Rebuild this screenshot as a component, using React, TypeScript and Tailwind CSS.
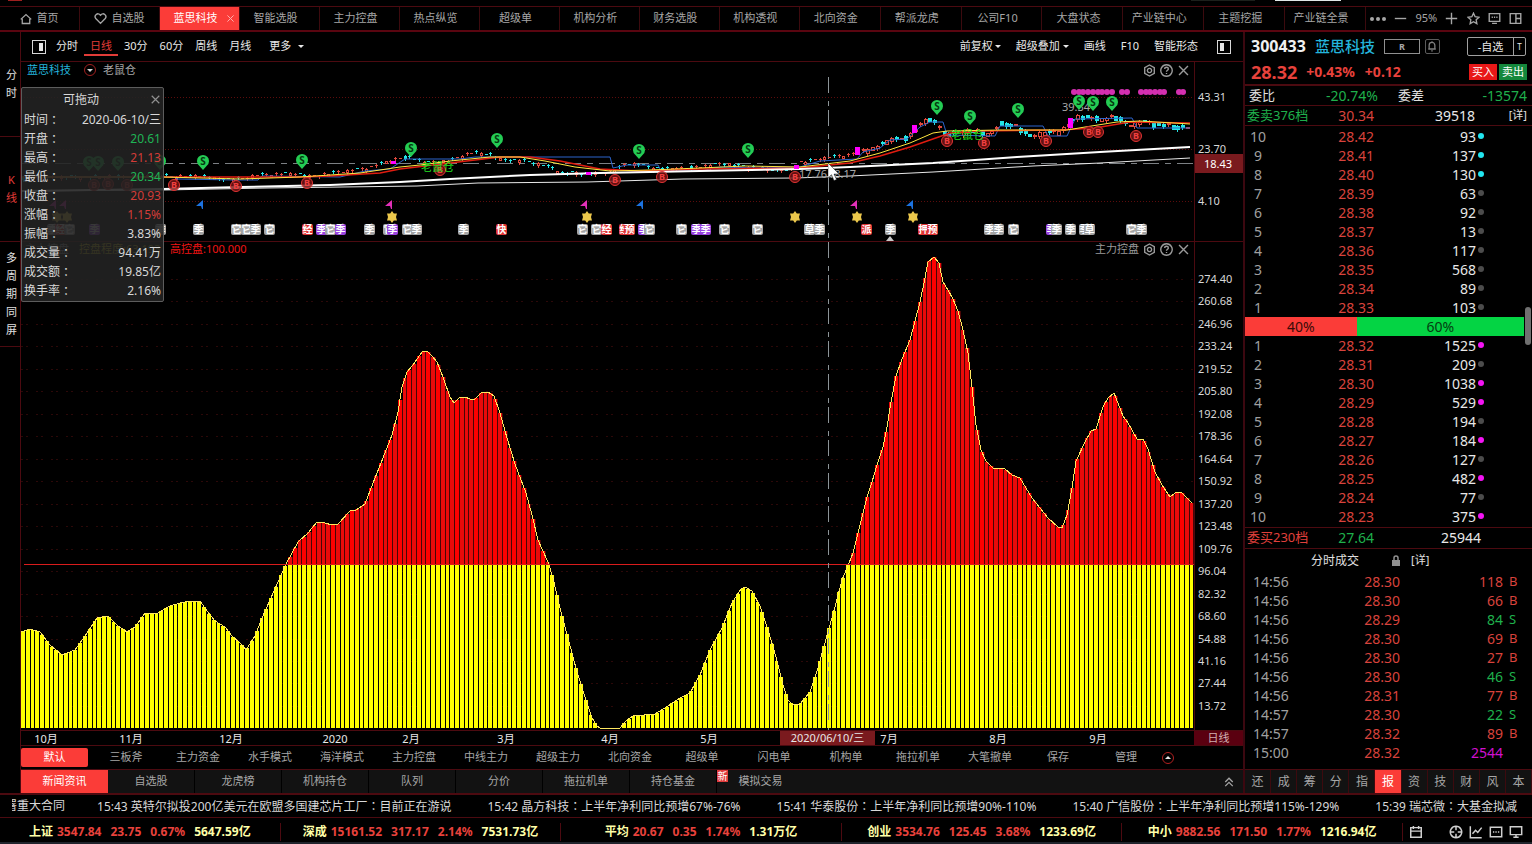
import { useState } from "react";
import clsx from "clsx";

type Point = [number, number];

// plot areas share these canvas bounds
const LEFT = 21;
const WIDTH = 1173;
const TOP = 62;
const HEIGHT = 179;
const STEP = 4.77;

const TABS = [
  "首页", "自选股", "蓝思科技", "智能选股", "主力控盘", "热点纵览", "超级单", "机构分析", "财务选股", "机构透视",
  "北向资金", "帮派龙虎", "公司F10", "大盘状态", "产业链中心", "主题挖掘", "产业链全景",
];
const PERIODS = ["分时", "日线", "30分", "60分", "周线", "月线"];
const SIDE = ["分时", "K线", "多周期同屏"];
const TEMPLATES = [
  "三板斧", "主力资金", "水手模式", "海洋模式", "主力控盘", "中线主力", "超级主力", "北向资金", "超级单", "闪电单",
  "机构单", "拖拉机单", "大笔撤单",
];
const PANELS = ["新闻资讯", "自选股", "龙虎榜", "机构持仓", "队列", "分价", "拖拉机单", "持仓基金", "模拟交易"];
const QUOTE_TABS = ["还", "成", "筹", "分", "指", "报", "资", "技", "财", "风", "本"];

const DETAIL = [
  { label: "时间", value: "2020-06-10/三", cls: "text-[#d8d8d8]" },
  { label: "开盘", value: "20.61", cls: "text-[#1fb455]" },
  { label: "最高", value: "21.13", cls: "text-[#d23c38]" },
  { label: "最低", value: "20.34", cls: "text-[#1fb455]" },
  { label: "收盘", value: "20.93", cls: "text-[#d23c38]" },
  { label: "涨幅", value: "1.15%", cls: "text-[#d23c38]" },
  { label: "振幅", value: "3.83%", cls: "text-[#d8d8d8]" },
  { label: "成交量", value: "94.41万", cls: "text-[#d8d8d8]" },
  { label: "成交额", value: "19.85亿", cls: "text-[#d8d8d8]" },
  { label: "换手率", value: "2.16%", cls: "text-[#d8d8d8]" },
];

const MONTHS: [string, number][] = [
  ["10月", 46], ["11月", 131], ["12月", 231], ["2020", 335], ["2月", 411], ["3月", 506], ["4月", 610],
  ["5月", 709], ["7月", 889], ["8月", 998], ["9月", 1098],
];

const AXIS = [
  "274.40", "260.68", "246.96", "233.24", "219.52", "205.80", "192.08", "178.36", "164.64", "150.92",
  "137.20", "123.48", "109.76", "96.04", "82.32", "68.60", "54.88", "41.16", "27.44", "13.72",
];

interface Level {
  level: number;
  price: string;
  volume: number;
  dot?: "cyan" | "pink";
}

const ASKS: Level[] = [
  { level: 10, price: "28.42", volume: 93, dot: "cyan" },
  { level: 9, price: "28.41", volume: 137, dot: "cyan" },
  { level: 8, price: "28.40", volume: 130, dot: "cyan" },
  { level: 7, price: "28.39", volume: 63 },
  { level: 6, price: "28.38", volume: 92 },
  { level: 5, price: "28.37", volume: 13 },
  { level: 4, price: "28.36", volume: 117 },
  { level: 3, price: "28.35", volume: 568 },
  { level: 2, price: "28.34", volume: 89 },
  { level: 1, price: "28.33", volume: 103 },
];

const BIDS: Level[] = [
  { level: 1, price: "28.32", volume: 1525, dot: "pink" },
  { level: 2, price: "28.31", volume: 209 },
  { level: 3, price: "28.30", volume: 1038, dot: "pink" },
  { level: 4, price: "28.29", volume: 529, dot: "pink" },
  { level: 5, price: "28.28", volume: 194 },
  { level: 6, price: "28.27", volume: 184, dot: "pink" },
  { level: 7, price: "28.26", volume: 127 },
  { level: 8, price: "28.25", volume: 482, dot: "pink" },
  { level: 9, price: "28.24", volume: 77 },
  { level: 10, price: "28.23", volume: 375, dot: "pink" },
];

const TRADES: [string, string, number, string][] = [
  ["14:56", "28.30", 118, "B"],
  ["14:56", "28.30", 66, "B"],
  ["14:56", "28.29", 84, "S"],
  ["14:56", "28.30", 69, "B"],
  ["14:56", "28.30", 27, "B"],
  ["14:56", "28.30", 46, "S"],
  ["14:56", "28.31", 77, "B"],
  ["14:57", "28.30", 22, "S"],
  ["14:57", "28.32", 89, "B"],
  ["15:00", "28.32", 2544, ""],
];

const NEWS = [
  "15:43 英特尔拟投200亿美元在欧盟多国建芯片工厂：目前正在游说",
  "15:42 晶方科技：上半年净利同比预增67%-76%",
  "15:41 华泰股份：上半年净利同比预增90%-110%",
  "15:40 广信股份：上半年净利同比预增115%-129%",
  "15:39 瑞芯微：大基金拟减",
];

const INDEXES = [
  ["上证", "3547.84", "23.75", "0.67%", "5647.59亿"],
  ["深成", "15161.52", "317.17", "2.14%", "7531.73亿"],
  ["平均", "20.67", "0.35", "1.74%", "1.31万亿"],
  ["创业", "3534.76", "125.45", "3.68%", "1233.69亿"],
  ["中小", "9882.56", "171.50", "1.77%", "1216.94亿"],
];

// control ratio curve
const CONTROL: Point[] = [
  [21, 632], [30, 629], [40, 632], [50, 645], [62, 655], [75, 650], [85, 636], [97, 618], [108, 616], [118, 626],
  [127, 632], [135, 627], [145, 613], [158, 613], [170, 606], [180, 603], [190, 601], [200, 601], [207, 611],
  [215, 621], [225, 627], [232, 636], [240, 643], [246, 650], [255, 636], [262, 618], [270, 600], [278, 582],
  [286, 564], [298, 542], [308, 533], [317, 522], [325, 523], [332, 525], [338, 524], [350, 511], [356, 510],
  [365, 504], [373, 483], [383, 458], [392, 435], [398, 412], [402, 387], [407, 372], [413, 365], [422, 352],
  [427, 351], [432, 356], [437, 362], [443, 377], [450, 397], [454, 403], [459, 398], [465, 397], [470, 399],
  [475, 399], [482, 392], [488, 392], [494, 396], [500, 413], [507, 438], [515, 464], [526, 493], [532, 515],
  [538, 540], [548, 562], [553, 578], [560, 608], [568, 638], [577, 672], [586, 700], [592, 718], [597, 726],
  [600, 728], [620, 728], [627, 720], [633, 716], [655, 714], [668, 706], [680, 698], [690, 693], [700, 675],
  [710, 650], [722, 628], [732, 603], [741, 589], [745, 587], [752, 591], [760, 606], [768, 630], [776, 657],
  [783, 685], [788, 700], [793, 705], [800, 704], [810, 692], [818, 668], [828, 632], [835, 607], [842, 580],
  [849, 563], [853, 553], [858, 533], [867, 497], [872, 482], [877, 465], [883, 447], [887, 427], [891, 402],
  [896, 376], [902, 359], [910, 340], [915, 321], [920, 302], [924, 283], [928, 262], [934, 257], [939, 263],
  [943, 282], [948, 290], [953, 299], [958, 311], [963, 330], [968, 353], [972, 387], [976, 425], [981, 450],
  [986, 461], [993, 468], [1005, 469], [1012, 475], [1020, 478], [1032, 498], [1040, 508], [1048, 518],
  [1058, 527], [1062, 528], [1067, 515], [1072, 488], [1076, 461], [1085, 442], [1091, 431], [1096, 429],
  [1103, 407], [1108, 398], [1114, 393], [1123, 416], [1128, 423], [1137, 439], [1143, 439], [1148, 449],
  [1155, 472], [1162, 485], [1170, 497], [1175, 493], [1181, 492], [1192, 503],
];

const PRICE: Point[] = [
  [24, 178], [60, 176], [100, 176], [165, 175], [175, 176], [205, 175], [215, 178], [235, 179], [262, 174], [300, 173],
  [310, 176], [340, 171], [370, 167], [395, 158], [410, 156], [425, 162], [450, 160], [470, 152], [490, 153],
  [500, 159], [520, 159], [540, 164], [555, 168], [560, 172], [600, 173], [615, 169], [625, 163], [640, 164],
  [660, 168], [690, 167], [720, 163], [750, 166], [780, 170], [795, 167], [800, 162], [830, 156], [850, 154],
  [860, 150], [880, 145], [890, 137], [905, 137], [915, 128], [925, 118], [935, 120], [945, 133], [970, 129],
  [990, 133], [1000, 122], [1015, 124], [1030, 135], [1045, 131], [1060, 130], [1070, 122], [1078, 114],
  [1100, 118], [1115, 115], [1130, 124], [1140, 120], [1160, 123], [1190, 127],
];

const LINE_YELLOW = "21,177 163,177 240,179 300,177 360,173 400,167 420,165 450,161 490,157 520,157 545,161 575,167 610,171 650,170 700,168 745,166 800,167 850,161 880,153 910,143 933,133 947,131 1000,130 1067,130 1085,127 1117,122 1140,121 1190,124";
const LINE_RED = "21,177 163,177 300,177 330,176 380,173 400,169 450,163 500,157 530,157 560,161 600,169 640,171 700,169 800,168 850,163 880,156 910,147 950,133 980,131 1060,130 1095,128 1130,122 1190,123";
const LINE_BLUE = "60,177 175,177 177,179 235,180 258,180 262,176 340,177 365,171 390,169 405,159 460,159 475,157 610,157 613,168 627,165 658,165 661,171 700,171 720,167 760,168 800,167 820,161 857,159 863,152 880,148 890,140 907,139 920,127 930,122 943,122 947,135 995,136 1000,126 1043,126 1048,136 1067,136 1075,119 1132,118 1137,128 1190,128";
const LINE_LONG = "21,191 163,189 240,187 330,185 400,182 450,179 530,175 600,173 700,171 800,169 850,167 933,163 1017,157 1100,152 1190,147";
const LINE_SLOW = "21,191 163,190 267,188 417,186 478,183 587,182 683,179 795,178 850,176 933,172 1033,166 1100,163 1190,158";

const SELLS: Point[] = [
  [89, 162], [98, 162], [118, 162], [160, 161], [203, 161], [302, 160], [411, 148], [497, 139], [639, 150],
  [748, 149], [937, 106], [970, 116], [1018, 109], [1079, 101], [1093, 102], [1112, 102],
];
const BUYS: Point[] = [
  [94, 185], [108, 184], [127, 185], [174, 185], [236, 186], [307, 183], [440, 170], [615, 180], [662, 177],
  [795, 177], [947, 141], [984, 143], [1046, 141], [1089, 132], [1098, 132], [1136, 136],
];
const DOTS = [
  1074, 1079, 1083, 1088, 1093, 1098, 1102, 1107, 1112, 1122, 1127, 1141, 1146, 1150, 1155, 1160, 1164, 1179, 1183,
];
const STARS = [57, 67, 392, 587, 795, 857, 913];
const FLAGS: [number, string][] = [
  [54, "#e22fb8"], [64, "#e22fb8"], [201, "#1c72e0"], [390, "#e22fb8"], [585, "#e22fb8"], [641, "#1c72e0"],
  [855, "#e22fb8"], [911, "#1c72e0"],
];
const SPIKES: [number, number, number][] = [
  [391, 161, 3], [586, 172, 3], [794, 165, 4], [855, 147, 8], [912, 125, 8], [1068, 118, 10],
];

const BADGES: [number, string, "gray" | "red" | "purple"][] = [
  [52, "季", "gray"], [60, "经", "red"], [69, "它", "gray"], [94, "季", "purple"], [160, "季", "gray"],
  [198, "季", "gray"], [236, "它", "gray"], [246, "它", "gray"], [255, "季", "gray"], [269, "它", "gray"],
  [307, "经", "red"], [321, "季", "purple"], [330, "它", "gray"], [340, "季", "purple"], [369, "季", "gray"],
  [388, "它", "gray"], [392, "季", "purple"], [407, "它", "gray"], [416, "季", "gray"], [463, "季", "gray"],
  [501, "快", "red"], [582, "它", "gray"], [596, "它", "gray"], [606, "经", "red"], [624, "经", "red"],
  [629, "预", "red"], [643, "季", "purple"], [649, "它", "gray"], [681, "它", "gray"], [696, "季", "purple"],
  [705, "季", "purple"], [724, "它", "gray"], [757, "它", "gray"], [809, "草", "gray"], [819, "季", "gray"],
  [866, "派", "red"], [890, "季", "gray"], [923, "押", "red"], [932, "预", "red"], [989, "季", "gray"],
  [998, "季", "gray"], [1013, "它", "gray"], [1051, "季", "purple"], [1056, "季", "gray"], [1070, "季", "gray"],
  [1084, "季", "gray"], [1089, "草", "gray"], [1131, "它", "gray"], [1141, "季", "gray"],
];

const BADGE_BG = { gray: "bg-[#a4a4a4]", red: "bg-[#e03434]", purple: "bg-[#9a44e0]" };

function valueAt(points: Point[], x: number): number {
  const i = points.findIndex((p) => p[0] >= x);
  if (i < 0) return points[points.length - 1][1];
  if (i === 0) return points[0][1];
  const [x0, y0] = points[i - 1];
  const [x1, y1] = points[i];
  return y0 + ((y1 - y0) * (x - x0)) / (x1 - x0);
}

function left(x: number): string {
  return `${((x - LEFT) / WIDTH) * 100}%`;
}

function place(x: number, y: number) {
  return { left: left(x), top: `${((y - TOP) / HEIGHT) * 100}%` };
}

const ICONS = {
  home: "M1 8.5 8 2l7 6.500M3 7.500V14h10V7.500",
  heart: "M8 14 2.200 8C-.5 4.500 4.500-.5 8 4c3.500-4.500 8.500.5 5.800 4z",
  star: "m8 1.500 2 4.300 4.700.6-3.400 3.200.8 4.700L8 12l-4.100 2.300.8-4.700L1.300 6.400 6 5.800z",
  message: "M1.500 2h13v9.500h-13zM4.500 6.500h1.500M7.300 6.500h1.500M10.200 6.500h1.500M5 14h6",
  layout: "M1.500 2h13v12h-13zM8.500 2v12M8.500 8h6",
  minus: "M1 8h14",
  plus: "M1 8h14M8 1v14",
  gear: "M8 1.200 13.900 4.600v6.800L8 14.800 2.100 11.400V4.600zM8 5.400a2.600 2.600 0 1 0 .01 0z",
  help: "M8 1a7 7 0 1 0 .01 0zM5.800 6.200c0-3 4.500-2.800 4.500-.2 0 1.600-2.300 1.700-2.300 3.500M8 11.200v1.200",
  close: "m2.500 2.500 11 11M13.500 2.500l-11 11",
  bell: "M3 12h10M4.200 12V7c0-5 7.600-5 7.600 0v5M8 1.500v2M7 14.500h2",
  chevrons: "m3 8 5-5 5 5M3 13.500l5-5 5 5",
  calendar: "M2 3h12v11H2zM2 7h12M5 1v3.500M11 1v3.500",
  target: "M8 1.500a6.500 6.500 0 1 0 .01 0zM8 1v5M8 10v5M1 8h5M10 8h5",
  chart: "M1.500 1.500v13h13M4 10l3.500-4 2.500 2.500L14.500 3",
  chat: "M1.500 2.500h13v11h-13zM4.500 8h1.500M7.300 8h1.500M10.200 8h1.500",
  monitor: "M1.500 2h13v9h-13zM8 11v3M5 14h6",
};

function Icon({ name, size = 14, className }: { name: keyof typeof ICONS; size?: number; className?: string }) {
  return (
    <svg
      viewBox="0 0 16 16"
      width={size}
      height={size}
      fill="none"
      stroke="currentColor"
      strokeWidth={1.7}
      className={clsx("shrink-0", className)}
      aria-hidden="true"
    >
      <path d={ICONS[name]} />
    </svg>
  );
}

function Caret() {
  return (
    <svg viewBox="0 0 6 3" width="6" height="3" className="shrink-0" aria-hidden="true">
      <path d="M0 0h6L3 3z" fill="currentColor" />
    </svg>
  );
}

function TopTabs() {
  return (
    <header>
      <div className="flex h-[6px] items-start pl-2">
        <span className="h-px w-[14px] bg-[#a02020]" />
        <span className="mr-5 ml-auto h-px w-16 bg-[#1c201c]" />
        <span className="mr-[191px] h-px w-[66px] bg-[#e0e8e8]" />
      </div>
      <nav className="flex h-[26px] border-t border-b-2 border-t-[#4c0a10] border-b-[#5a0510] text-[11px] text-[#a6a6a6]">
        {TABS.map((tab, i) => (
          <button
            key={tab}
            className={clsx(
              "relative flex min-w-0 items-center justify-center gap-1 border-r border-[#3c0a0e] whitespace-nowrap",
              i < 10 ? "flex-[80]" : "flex-[81]",
              i > 1 ? "pr-2" : "px-1",
              i === 2 && "bg-[#fb3c38] text-white",
            )}
          >
            {i === 0 && <Icon name="home" size={12} />}
            {i === 1 && <Icon name="heart" size={13} />}
            {tab}
            {i === 2 && <Icon name="close" size={9} className="absolute right-1 text-[#ffb0b0]" />}
          </button>
        ))}
        <div className="flex w-[166px] items-center justify-between pr-[10px] pl-1">
          <button aria-label="更多标签" className="flex gap-[2px]">
            <i className="size-1 rounded-full bg-current" />
            <i className="size-1 rounded-full bg-current" />
            <i className="size-1 rounded-full bg-current" />
          </button>
          <button aria-label="缩小"><Icon name="minus" size={13} /></button>
          <span>95%</span>
          <button aria-label="放大"><Icon name="plus" size={13} /></button>
          <button aria-label="收藏"><Icon name="star" size={13} /></button>
          <button aria-label="消息"><Icon name="message" size={13} /></button>
          <button aria-label="布局"><Icon name="layout" size={13} /></button>
        </div>
      </nav>
    </header>
  );
}

function Toolbar() {
  return (
    <div className="flex h-[30px] shrink-0 items-center border-b border-[#4c0a10] pr-3 pl-[11px] text-[11px] text-[#e8e8e8]">
      <button aria-label="左侧栏" className="mr-1 flex h-[14px] w-[14px] justify-end border border-[#d8d8d8] p-[2px]">
        <i className="w-1 bg-[#e8e8e8]" />
      </button>
      {PERIODS.map((p, i) => (
        <button
          key={p}
          className={clsx("h-[18px] border-b-2 px-[6px]", i === 1 ? "border-[#e23c38] text-[#e23c38]" : "border-transparent")}
        >
          {p}
        </button>
      ))}
      <button className="ml-3 flex items-center gap-[7px]">更多<Caret /></button>
      <div className="ml-auto flex items-center gap-[15px]">
        <button className="flex items-center gap-[2px]">前复权<Caret /></button>
        <button className="flex items-center gap-[3px]">超级叠加<Caret /></button>
        <button>画线</button>
        <button>F10</button>
        <button>智能形态</button>
        <button aria-label="右侧栏" className="ml-1 flex h-[14px] w-[14px] border border-[#d8d8d8] p-[2px]">
          <i className="w-1 bg-[#e8e8e8]" />
        </button>
      </div>
    </div>
  );
}

function PaneTools({ title }: { title?: string }) {
  return (
    <div className="ml-auto flex items-center gap-1 text-[#9a9a9a]">
      {title && <span>{title}</span>}
      <button aria-label="设置"><Icon name="gear" size={13} /></button>
      <button aria-label="帮助"><Icon name="help" size={13} /></button>
      <button aria-label="关闭"><Icon name="close" size={13} /></button>
    </div>
  );
}

function Candles() {
  const items = [];
  for (let i = 0; i < 245; i++) {
    const x = Math.round(LEFT + 2 + i * STEP);
    const y = Math.round(valueAt(PRICE, x) + ((i * 7) % 5) / 2 - 1);
    const up = valueAt(PRICE, x + 5) < valueAt(PRICE, x - 5) ? i % 5 !== 0 : i % 4 === 0;
    const color = up ? "#e0483c" : "#22e6e6";
    const high = y < 150;
    const h = high ? 2 + ((i * 3) % 4) : i % 4 === 0 ? 3 : 1;
    if (i % 3 !== 1) {
      items.push(<rect key={`w${i}`} x={x} y={y - 1} width={1} height={h + 3} fill={color} />);
    }
    items.push(<rect key={`c${i}`} x={x - 1} y={y} width={high ? 4 : 3} height={h} fill={color} />);
    if (up && h > 2) {
      items.push(<rect key={`h${i}`} x={x} y={y + 1} width={high ? 2 : 1} height={h - 2} fill="#000" />);
    }
  }
  return <g shapeRendering="crispEdges">{items}</g>;
}

function PricePane() {
  return (
    <section className="flex min-h-0 border-b border-[#4c0a10]">
      <div className="relative flex min-w-0 flex-1">
        <svg viewBox="21 62 1173 179" preserveAspectRatio="none" className="h-auto min-h-0 w-full flex-1" aria-label="日K线">
          <g stroke="#5c0c0c" strokeDasharray="1 2">
            <path d="M21 97.500H1194M21 149.500H1194M21 201.500H1194" />
          </g>
          <path d="M21 163.500H1194" stroke="#7c8084" strokeDasharray="16 6 6 6" />
          <path d="M828.500 77V241" stroke="#8c9498" strokeDasharray="16 8 5 4" />
          <Candles />
          <g fill="none">
            <polyline points={LINE_BLUE} stroke="#2c64cc" />
            <polyline points={LINE_RED} stroke="#e01c10" strokeWidth="1.500" />
            <polyline points={LINE_YELLOW} stroke="#ffe640" />
            <polyline points={LINE_SLOW} stroke="#e8e8e8" />
            <polyline points={LINE_LONG} stroke="#fff" strokeWidth="2" />
          </g>
          {SPIKES.map(([x, y, h]) => (
            <rect key={x} x={x} y={y} width="5" height={h} fill="#ff00ff" />
          ))}
          {DOTS.map((x) => (
            <circle key={x} cx={x} cy="92" r="3" fill="#d42fb0" />
          ))}
          {FLAGS.map(([x, color]) => (
            <path key={x} d={`M${x + 2} 200v9h-1l-1-3h-5z`} fill={color} />
          ))}
          {STARS.map((x) => (
            <g key={x} transform={`translate(${x} 217)`} fill="#ecc84c">
              <path d="M0-6 1.800-3.500H5L4 0 5 3.500H1.800L0 6-1.800 3.500H-5L-4 0-5-3.500h3.200z" />
            </g>
          ))}
          <path d="M886 241l4-5 4 5z" fill="#c8c8c8" />
        </svg>

        {BUYS.map(([x, y]) => (
          <span
            key={x}
            className="absolute -mt-[6px] -ml-[6px] size-3 rounded-full border border-[#e03434] bg-[#7c1414]/80 text-center text-[9px] leading-[10px] font-bold text-[#f04040]"
            style={place(x, y)}
          >
            B
          </span>
        ))}
        <span className="absolute text-[11px] leading-3 text-[#20e020]" style={place(421, 161)}>老鼠仓</span>
        <span className="absolute text-[11px] leading-3 text-[#20e020]" style={place(951, 129)}>老鼠仓</span>
        <span className="absolute text-[11px] leading-3 text-[#a8a8a8]" style={place(1062, 101)}>39.34</span>
        <span className="absolute text-[11px] leading-3 text-[#a8a8a8]" style={place(799, 168)}>17.76</span>
        <span className="absolute text-[11px] leading-3 text-[#a8a8a8]" style={place(828, 168)}>18.17</span>
        {SELLS.map(([x, y]) => (
          <span key={x} className="absolute -mt-[6px] -ml-[6px] h-[15px] w-3" style={place(x, y)}>
            <svg viewBox="0 0 12 15" className="absolute h-[15px] w-3" aria-hidden="true">
              <path d="M6 15 2 10.500a6 6 0 1 1 8 0z" fill="#24cc54" />
            </svg>
            <span className="relative block text-center text-[10px] leading-3 font-bold text-[#04380f]">S</span>
          </span>
        ))}
        {BADGES.map(([x, text, kind]) => (
          <span
            key={x}
            className={clsx("absolute -ml-[5px] h-[11px] w-[11px] rounded-xs text-center text-[10px] leading-[11px] font-bold text-white", BADGE_BG[kind])}
            style={place(x, 224)}
          >
            {text}
          </span>
        ))}
        <svg viewBox="0 0 12 18" className="absolute z-10 h-[18px] w-3" style={place(828, 163)} aria-hidden="true">
          <path d="M0 0v15l3.500-3.300L6 17.500l2.500-1L6 11h5z" fill="#fff" stroke="#222" strokeWidth=".5" />
        </svg>

        <div className="absolute inset-x-0 top-0 flex h-4 items-center pr-1 pl-[6px] text-[11px]">
          <span className="text-[#24b4dc]">蓝思科技</span>
          <button aria-label="选择指标" className="mr-[7px] ml-[13px] flex size-3 items-center justify-center rounded-full border border-[#a02020] text-[#d8d8d8]">
            <Caret />
          </button>
          <span className="text-[#a6a6a6]">老鼠仓</span>
          <PaneTools />
        </div>
      </div>
      <div className="relative flex w-[49px] shrink-0 flex-col justify-between border-l border-[#4c0a10] pt-7 pb-[33px] pl-[3px] text-[11px] leading-[14px] text-[#d8d8d8]">
        <span>43.31</span>
        <span>23.70</span>
        <span>4.10</span>
        <span className="absolute left-0 h-[19px] w-full bg-[#7a1a1e] pl-[9px] leading-[19px] text-white" style={{ top: place(0, 154).top }}>
          18.43
        </span>
      </div>
    </section>
  );
}

function ControlPane() {
  const bars = [];
  for (let i = 0; i < 246; i++) {
    const x = Math.round(LEFT + i * STEP);
    const w = Math.round(LEFT + (i + 1) * STEP) - x;
    const y = Math.round(valueAt(CONTROL, x + 2));
    if (y < 565) {
      bars.push(<rect key={`b${i}`} x={x} y={y} width={w} height={565 - y} fill="#480606" />);
      bars.push(<rect key={`r${i}`} x={x} y={y} width={w - 1} height={565 - y} fill={w === 5 && i % 2 ? "#ff0000" : "#ea0a0a"} />);
    }
    const top = Math.max(y, 565);
    if (top < 728) {
      bars.push(<rect key={`y${i}`} x={x} y={top} width={w - 1} height={728 - top} fill="#ffff00" />);
    }
  }
  const curve = CONTROL.map((p) => p.join(",")).join(" ");

  return (
    <section className="flex min-h-0">
      <div className="relative flex min-w-0 flex-1">
        <svg viewBox="21 242 1173 488" preserveAspectRatio="none" className="h-auto min-h-0 w-full flex-1" aria-label="主力控盘">
          <g stroke="#2c0808" strokeDasharray="2 3 2 8" shapeRendering="crispEdges">
            {AXIS.map((label, i) => {
              const y = Math.round(279 + i * 22.47);
              return <path key={label} d={`M21 ${y + 0.5}H1194`} />;
            })}
          </g>
          <g shapeRendering="crispEdges">{bars}</g>
          <polyline points={curve} fill="none" stroke="#ffe860" shapeRendering="crispEdges" />
          <path d="M24 564.500H1194" stroke="#d81c1c" />
          <path d="M828.500 242V730" stroke="#8c9498" strokeDasharray="16 8 5 4" />
        </svg>
        <div className="absolute inset-x-0 top-0 flex h-[15px] items-center pr-1 pl-1 text-[11px]">
          <span className="w-[54px] text-[#a6a6a6]">主力控盘</span>
          <span className="w-[91px] text-[#d8c820]">控盘程度:63.193</span>
          <span className="text-[#f01414]">高控盘:100.000</span>
          <PaneTools title="主力控盘" />
        </div>
      </div>
      <div className="flex w-[49px] shrink-0 flex-col justify-between border-l border-[#4c0a10] pt-[30px] pb-[17px] pl-[3px] text-[11px] leading-[14px] text-[#d8d8d8]">
        {AXIS.map((label) => (
          <span key={label}>{label}</span>
        ))}
      </div>
    </section>
  );
}

function DetailBox({ onClose }: { onClose: () => void }) {
  return (
    <div className="absolute top-[25px] left-0 z-20 w-[143px] rounded-xs border border-[#5c5c5c] bg-[#222222]/90 px-[2px] pb-px text-xs leading-[19px] text-[#d8d8d8]">
      <div className="flex h-[22px] items-center">
        <span className="flex-1 pr-3 text-center">可拖动</span>
        <button aria-label="关闭" onClick={onClose} className="text-[#909090]"><Icon name="close" size={11} /></button>
      </div>
      <dl>
        {DETAIL.map((row) => (
          <div key={row.label} className="flex h-[19px] justify-between">
            <dt className="flex">
              {row.label}
              <span className="font-['Noto_Sans_CJK_TC',sans-serif]">：</span>
            </dt>
            <dd className={row.cls}>{row.value}</dd>
          </div>
        ))}
      </dl>
    </div>
  );
}

function DateAxis() {
  return (
    <div className="flex h-4 shrink-0 border-y border-[#4c0a10] text-[11px] leading-[14px] text-[#e8e8e8]">
      <div className="relative min-w-0 flex-1">
        {MONTHS.map(([text, x]) => (
          <span key={text} className="absolute top-px -ml-5 w-10 text-center" style={{ left: left(x) }}>{text}</span>
        ))}
        <span className="absolute h-full w-[95px] bg-[#7a1a1e] text-center" style={{ left: left(780) }}>2020/06/10/三</span>
      </div>
      <div className="w-[49px] bg-[#5a0010] text-center text-[#d0b0b0]">日线</div>
    </div>
  );
}

function CenterColumn() {
  const [open, setOpen] = useState(true);

  return (
    <main className="flex min-w-0 flex-1 flex-col">
      <Toolbar />
      <div className="relative grid min-h-0 flex-1 grid-rows-[45fr_122fr]">
        <PricePane />
        <ControlPane />
        {open && <DetailBox onClose={() => setOpen(false)} />}
      </div>
      <DateAxis />
      <div className="flex h-6 shrink-0 items-center border-b border-[#4c0a10] text-[11px] text-[#a6a6a6]">
        <button className="mr-[2px] h-[19px] w-[67px] rounded-xs bg-[#fb3c38] text-white">默认</button>
        {TEMPLATES.map((t) => (
          <button key={t} className="w-18 whitespace-nowrap">{t}</button>
        ))}
        <button className="w-16">保存</button>
        <button className="w-18">管理</button>
        <button aria-label="收起模板" className="flex size-3 items-center justify-center rounded-full border border-[#b02020] text-[#e8e8e8]">
          <svg viewBox="0 0 6 3" width="6" height="3" aria-hidden="true"><path d="M0 3h6L3 0z" fill="currentColor" /></svg>
        </button>
      </div>
      <div className="flex h-[23px] shrink-0 bg-[#121212] text-[11px] text-[#a6a6a6]">
        {PANELS.map((p, i) => (
          <button
            key={p}
            className={clsx(
              "relative w-[87px]",
              i === 0 ? "bg-[#fb3c38] text-white" : i < 8 && "border-r border-black",
            )}
          >
            {i === 8 && <span className="absolute top-0 left-0 w-[11px] bg-[#e03c3c] text-[10px] leading-3 text-white">新</span>}
            {p}
          </button>
        ))}
        <button aria-label="展开" className="mr-2 ml-auto"><Icon name="chevrons" size={12} /></button>
      </div>
    </main>
  );
}

function LevelTable({ rows, label }: { rows: Level[]; label: string }) {
  return (
    <table aria-label={label} className="w-full table-fixed text-sm leading-[19px]">
      <tbody>
        {rows.map((r) => (
          <tr key={r.level} className="h-[19px]">
            <td className="w-[26px] text-center text-[#a0a0a0]">{r.level}</td>
            <td className="w-[103px] text-right text-[#d8433c]">{r.price}</td>
            <td className="w-[102px] text-right text-[#e8e8e8]">{r.volume}</td>
            <td className="pl-[2px]">
              <i
                className={clsx(
                  "mb-[2px] block size-[6px] rounded-full",
                  r.dot === "cyan" ? "bg-[#22e6f0]" : r.dot === "pink" ? "bg-[#f414f4]" : "bg-[#4c4c4c]",
                )}
              />
            </td>
          </tr>
        ))}
      </tbody>
    </table>
  );
}

function QuoteColumn() {
  return (
    <aside className="relative flex w-[289px] shrink-0 flex-col border-l-2 border-[#3c0810]">
      <div className="flex h-7 items-center pr-[6px] pl-[6px]">
        <span className="text-base font-bold text-[#f0f0f0]">300433</span>
        <span className="ml-[9px] text-[15px] font-medium text-[#24b4dc]">蓝思科技</span>
        <button className="ml-[9px] h-[15px] w-9 border border-[#909090] text-[9px] leading-[13px] font-bold text-[#a6a6a6]">R</button>
        <button aria-label="提醒" className="ml-[5px] flex size-[15px] items-center justify-center rounded-xs border border-[#5c5c5c] text-[#808080]">
          <Icon name="bell" size={12} />
        </button>
        <div className="ml-auto flex h-[19px] rounded-xs border border-[#a0a0a0] text-[11px] leading-[17px] text-[#e8e8e8]">
          <button className="w-[45px]">-自选</button>
          <button className="w-3 border-l border-[#a0a0a0] text-[8px]">T</button>
        </div>
      </div>
      <div className="flex h-[26px] items-center border-b-2 border-[#4c0a10] pr-[5px] pl-[6px] font-bold text-[#e8423c]">
        <span className="text-lg">28.32</span>
        <span className="ml-[9px] text-sm">+0.43%</span>
        <span className="ml-[10px] text-sm">+0.12</span>
        <button className="ml-auto h-4 w-7 bg-[#e81818] text-[11px] leading-4 font-normal text-white">买入</button>
        <button className="ml-[2px] h-4 w-7 bg-[#14883c] text-[11px] leading-4 font-normal text-white">卖出</button>
      </div>
      <div className="flex h-5 items-center border-b border-[#4c0a10] pr-[5px] pl-1 text-[13px]">
        <span className="text-[#e0e0e0]">委比</span>
        <span className="w-[103px] text-right text-sm text-[#1fb04c]">-20.74%</span>
        <span className="ml-5 text-[#e0e0e0]">委差</span>
        <span className="ml-auto text-sm text-[#1fb04c]">-13574</span>
      </div>
      <div className="mb-px flex h-5 items-center border-b border-[#4c0a10] pr-[5px] pl-[2px] text-[13px]">
        <span className="w-[90px] text-[#1fb04c]">委卖376档</span>
        <span className="w-[37px] text-right text-sm text-[#d8433c]">30.34</span>
        <span className="w-[101px] text-right text-sm text-[#e8e8e8]">39518</span>
        <button className="ml-auto text-[11px] text-[#e0e0e0]">[详]</button>
      </div>
      <LevelTable rows={ASKS} label="委卖" />
      <div className="mr-2 flex h-[19px] text-center text-sm leading-[19px] text-[#3a0c08]">
        <span className="bg-[#fb3c38]" style={{ width: "40%" }}>40%</span>
        <span className="bg-[#04d444] text-[#043c10]" style={{ width: "60%" }}>60%</span>
      </div>
      <LevelTable rows={BIDS} label="委买" />
      <div className="mt-px flex h-[22px] items-center border-y border-[#4c0a10] pl-[2px] text-[13px]">
        <span className="w-[90px] text-[#e0403c]">委买230档</span>
        <span className="w-[37px] text-right text-sm text-[#1fb04c]">27.64</span>
        <span className="w-[107px] text-right text-sm text-[#e8e8e8]">25944</span>
      </div>
      <div className="flex h-[23px] items-center pl-[66px] text-xs text-[#e0e0e0]">
        <h2>分时成交</h2>
        <svg viewBox="0 0 10 12" className="mr-[10px] ml-8 h-3 w-[10px]" aria-hidden="true">
          <path d="M1 5h8v6H1z" fill="#909090" />
          <path d="M3 5V3a2 2 0 0 1 4 0v2" fill="none" stroke="#909090" strokeWidth="1.500" />
        </svg>
        <button className="text-[11px]">[详]</button>
      </div>
      <table aria-label="分时成交" className="w-full table-fixed text-sm leading-[19px]">
        <tbody>
          {TRADES.map(([time, price, volume, side], i) => (
            <tr
              key={i}
              className={clsx("h-[19px]", side === "B" ? "text-[#d8433c]" : side === "S" ? "text-[#1fb04c]" : "text-[#d010d0]")}
            >
              <td className="w-[55px] pl-2 text-[#a0a0a0]">{time}</td>
              <td className="w-[100px] text-right text-[#d8433c]">{price}</td>
              <td className="w-[103px] text-right">{volume}</td>
              <td className="pl-[6px] text-[13px]">{side}</td>
            </tr>
          ))}
        </tbody>
      </table>
      <div className="mt-auto flex h-6 border-t border-[#4c0a10] bg-[#121212] text-xs text-[#a6a6a6]">
        {QUOTE_TABS.map((t) => (
          <button key={t} className={clsx("flex-1 border-r border-[#3c0a0e]", t === "报" && "bg-[#fb3c38] text-white")}>{t}</button>
        ))}
      </div>
      <div className="absolute top-[275px] right-px h-[38px] w-[6px] rounded-full bg-[#707070]" />
    </aside>
  );
}

function Headline({ text }: { text: string }) {
  const [head, tail] = text.split("：");
  return (
    <a href="#news">
      {head}
      <span className="font-['Noto_Sans_CJK_TC',sans-serif]">：</span>
      {tail}
    </a>
  );
}

function Footer() {
  return (
    <footer className="shrink-0 border-t-2 border-[#4c0a10]">
      <div className="ml-3 flex h-[22px] items-center gap-8 overflow-hidden pr-3 text-xs whitespace-nowrap text-[#d8d8d8]">
        <a href="#news" className="-ml-[7px]">署重大合同</a>
        <div className="flex gap-9">
          {NEWS.map((n) => (
            <Headline key={n} text={n} />
          ))}
        </div>
      </div>
      <div className="flex h-[25px] items-center border-t border-[#4c0a10] pt-[3px] text-xs font-bold">
        {INDEXES.map(([name, last, change, percent, amount]) => (
          <div key={name} className="flex h-[18px] flex-1 items-center justify-center gap-[9px] border-r border-[#4c0a10] whitespace-nowrap text-[#e8423c]">
            <span><span className="mr-1 text-[#ffffa8]">{name}</span>{last}</span>
            <span>{change}</span>
            <span>{percent}</span>
            <span className="text-[#ffffa8]">{amount}</span>
          </div>
        ))}
        <div className="flex w-[129px] items-center gap-[6px] pr-[9px] pl-[6px] text-[#d0d0d0]">
          <button aria-label="日历" className="mr-auto"><Icon name="calendar" /></button>
          <button aria-label="定位"><Icon name="target" /></button>
          <button aria-label="走势"><Icon name="chart" /></button>
          <button aria-label="消息"><Icon name="chat" /></button>
          <button aria-label="屏幕"><Icon name="monitor" /></button>
        </div>
      </div>
      <div className="h-[2px] bg-[#20242c]" />
    </footer>
  );
}

export default function App() {
  return (
    <div className="flex h-screen min-h-[820px] flex-col overflow-hidden bg-black font-['Noto_Sans','Noto_Sans_CJK_SC',sans-serif]">
      <TopTabs />
      <div className="flex min-h-0 flex-1">
        <nav className="w-[21px] shrink-0 border-r border-[#4c0a10] text-[11px] leading-[18px] text-[#e0e0e0]">
          {SIDE.map((s, i) => (
            <button
              key={s}
              className={clsx("flex h-[105px] w-full flex-col items-center justify-center border-b border-[#4c0a10] pl-[3px]", i === 1 && "text-[#e23c38]")}
            >
              {s.split("").map((c) => (
                <span key={c}>{c}</span>
              ))}
            </button>
          ))}
        </nav>
        <CenterColumn />
        <QuoteColumn />
      </div>
      <Footer />
    </div>
  );
}
